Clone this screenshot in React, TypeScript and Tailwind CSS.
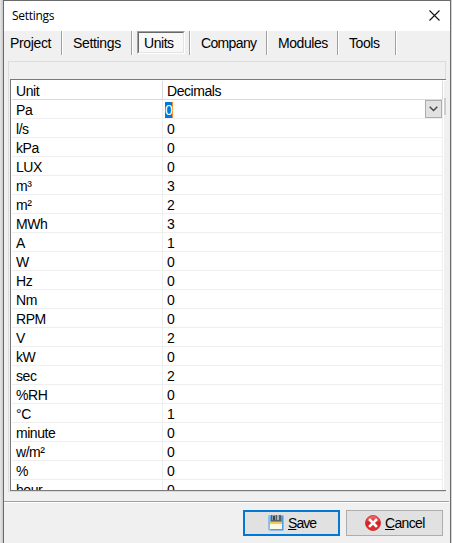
import React from "react";

const rows: [string, string][] = [
  ["l/s", "0"], ["kPa", "0"], ["LUX", "0"], ["m³", "3"], ["m²", "2"], ["MWh", "3"],
  ["A", "1"], ["W", "0"], ["Hz", "0"], ["Nm", "0"], ["RPM", "0"], ["V", "2"],
  ["kW", "0"], ["sec", "2"], ["%RH", "0"], ["°C", "1"], ["minute", "0"],
  ["w/m²", "0"], ["%", "0"], ["hour", "0"],
];

function Tab({ label, className }: { label: string; className: string }) {
  return (
    <div className={`h-6 shrink-0 border-r border-[#a0a0a0] shadow-[1px_0_0_#fff] leading-[24px] whitespace-nowrap ${className}`}>
      {label}
    </div>
  );
}

function SaveIcon() {
  return (
    <svg width="16" height="16" viewBox="0 0 16 16">
      <path d="M0.5 0.5h15v15h-14L0.5 14.5z" fill="#4a9ae8" />
      <path d="M1 1h1.5V15H1z" fill="#82bdf3" />
      <rect x="3" y="0" width="10" height="6" fill="#55606b" />
      <rect x="4" y="0" width="4" height="5" fill="#8e9ba7" />
      <rect x="5" y="1" width="2" height="4" fill="#3f4852" />
      <rect x="9" y="0" width="2" height="5" fill="#a9b3bd" />
      <rect x="2" y="7" width="12" height="7" fill="#fdf8e4" />
      <rect x="2" y="7" width="12" height="2" fill="#f3ca51" />
    </svg>
  );
}

function CancelIcon() {
  return (
    <svg width="16" height="16" viewBox="0 0 16 16">
      <defs>
        <linearGradient id="red" x1="0" y1="0" x2="0" y2="1">
          <stop offset="0" stopColor="#ef7777" />
          <stop offset="0.5" stopColor="#d91f25" />
          <stop offset="1" stopColor="#e8302f" />
        </linearGradient>
      </defs>
      <circle cx="8" cy="8" r="7.5" fill="url(#red)" stroke="#c9262b" strokeWidth="0.8" />
      <path d="M5 5l6 6M11 5l-6 6" stroke="#fff" strokeWidth="2.6" strokeLinecap="square" />
    </svg>
  );
}

export default function App() {
  return (
    <div className="flex h-[543px] w-[452px] overflow-hidden bg-[#d4d4d4] font-['Liberation_Sans',Arial,sans-serif] text-[14px] tracking-[-0.45px] text-black">
      <div className="w-[3px] shrink-0 bg-linear-to-r from-[#e8e8e8] to-[#c8c8c8]" />
      <div className="flex w-[448px] shrink-0 flex-col border-x border-t border-[#6b6b6b] bg-[#f0f0f0]">
        <div className="flex h-[30px] shrink-0 items-center justify-between bg-white pr-[10px] pl-2">
          <span className="font-['Open_Sans','Noto_Sans',sans-serif] text-[12px] tracking-[-0.3px]">Settings</span>
          <svg width="11" height="11" viewBox="0 0 11 11" className="mt-[-2px]">
            <path d="M.5.5l10 10M10.5.5l-10 10" stroke="#111" strokeWidth="1.1" />
          </svg>
        </div>

        <div className="flex h-[30px] shrink-0">
          <Tab label="Project" className="w-[58px] pl-[6px] tracking-[-0.35px]" />
          <Tab label="Settings" className="w-[70px] pl-[11px] tracking-[-0.35px]" />
          <div className="flex h-6 w-[58px] shrink-0 border-r border-[#a0a0a0] pl-[5px] shadow-[1px_0_0_#fff]">
            <div className="h-[23px] w-[48px] border border-t-[#a0a0a0] border-r-white border-b-white border-l-[#a0a0a0]">
              <div className="h-[21px] w-[46px] border border-t-[#696969] border-r-[#e3e3e3] border-b-[#e3e3e3] border-l-[#696969] bg-[#f8f8f8] pl-[5px] leading-[21px]">
                Units
              </div>
            </div>
          </div>
          <Tab label="Company" className="w-[77px] pl-[11px] tracking-[-0.65px]" />
          <Tab label="Modules" className="w-[71px] pl-[11px]" />
          <Tab label="Tools" className="w-[58px] pl-[11px]" />
        </div>

        <div className="ml-1 flex h-[431px] w-[438px] shrink-0 flex-col border border-[#dcdcdc] pt-[17px] pl-px">
          <div className="-mr-px flex h-[412px] shrink-0 border-y border-l border-[#7a7a7a] bg-white pt-px pl-px">
            <div className="h-[409px] w-[431px] shrink-0 overflow-hidden">
              <div className="flex h-[19px] border-r border-b border-[#dadada] leading-[21px]">
                <div className="w-[151px] border-r border-[#dadada] pl-1">Unit</div>
                <div className="pl-1">Decimals</div>
              </div>
              <div className="flex h-[19px] border-r border-b border-[#eeeeee] leading-[21px]">
                <div className="w-[151px] border-r border-[#eeeeee] pl-1">Pa</div>
                <div className="flex flex-1 justify-between pl-[2px]">
                  <span className="mt-[2px] h-4 w-2 border-r border-[#ff8728] bg-[#0078d7] leading-[17px] text-white">0</span>
                  <div className="flex h-[18px] w-[17px] items-center justify-center border border-[#adadad] bg-[#e1e1e1]">
                    <svg width="9" height="6" viewBox="0 0 9 6"><path d="M.7.7l3.8 3.8L8.3.7" fill="none" stroke="#444" strokeWidth="1.4" /></svg>
                  </div>
                </div>
              </div>
              {rows.map(([unit, decimals]) => (
                <div key={unit} className="flex h-[19px] border-r border-b border-[#eeeeee] leading-[21px]">
                  <div className="w-[151px] border-r border-[#eeeeee] pl-1">{unit}</div>
                  <div className="pl-1">{decimals}</div>
                </div>
              ))}
            </div>
            <div className="ml-px h-[409px] w-[2px] bg-[#f0f0f0] pt-[17px]">
              <div className="h-[17px] bg-[#cdcdcd]" />
            </div>
          </div>
        </div>

        <div className="mt-[9px] mr-px h-[2px] shrink-0 border-t border-[#a0a0a0] bg-white" />
        <div className="mt-[7px] flex gap-[6px] pl-[239px]">
          <button className="flex h-[26px] w-[97px] items-center border-2 border-[#0078d7] bg-[#e1e1e1] pl-[23px]">
            <SaveIcon />
            <span className="ml-1 pt-px tracking-[-0.95px]"><u>S</u>ave</span>
          </button>
          <button className="flex h-[26px] w-[97px] items-center border border-[#adadad] bg-[#e1e1e1] pl-[18px]">
            <CancelIcon />
            <span className="ml-1 pt-px tracking-[-0.65px]"><u>C</u>ancel</span>
          </button>
        </div>
      </div>
    </div>
  );
}
